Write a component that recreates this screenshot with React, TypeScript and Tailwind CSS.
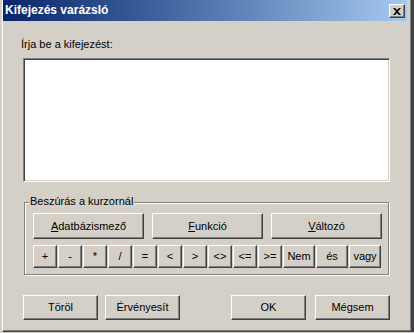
import type { ReactNode } from "react";

const font = { fontFamily: '"Liberation Sans", Arial, sans-serif' };

// klasszikus Win2k gomb (kiemelt keret)
function Btn({ children, className = "" }: { children: ReactNode; className?: string }) {
	return (
		<div
			className={`flex items-center justify-center bg-[#d4d0c8] border border-t-white border-l-white border-r-[#404040] border-b-[#404040] shadow-[inset_-1px_-1px_#808080] text-[11px] leading-[13px] text-black ${className}`}
		>
			{children}
		</div>
	);
}

const ops = ["+", "-", "*", "/", "=", "<", ">", "<>", "<=", ">="];
const words = ["Nem", "és", "vagy"];

export default function App() {
	return (
		<div className="w-[414px] h-[333px] bg-[#d4d0c8] pl-[2px] pb-[1px] flex" style={font}>
			<div className="flex-1 flex border-l border-l-white border-r-[3px] border-r-[#404040] border-b border-b-[#404040]">
				<div className="flex-1 flex flex-col border-r border-r-[#808080] border-b border-b-[#808080] pr-[3px]">
					{/* címsor */}
					<div className="h-[21px] flex items-start bg-gradient-to-r from-[#0a246a] to-[#a6caf0]">
						<div className="pl-[2px] mt-[3px] text-[12px] leading-[15px] font-bold text-white flex-1">Kifejezés varázsló</div>
						<Btn className="w-[16px] h-[14px] mt-[4px] mr-[2px]">
							<svg width="8" height="7" viewBox="0 0 8 7">
								<path d="M0 0h2l2 2l2-2h2l-3 3.5l3 3.5h-2l-2-2l-2 2h-2l3-3.5z" fill="#000" />
							</svg>
						</Btn>
					</div>

					<div className="mt-[17px] pl-[18px] h-[13px] text-[11px] leading-[13px] text-black">Írja be a kifejezést:</div>

					<div className="mt-[7px] ml-[20px] w-[367px] h-[124px] bg-white border border-t-[#808080] border-l-[#808080] border-r-white border-b-white shadow-[inset_1px_1px_#404040,inset_-1px_-1px_#d4d0c8]" />

					{/* Beszúrás csoport */}
					<div className="relative mt-[20px] ml-[21px] w-[365px] h-[73px] border border-[#808080] shadow-[inset_1px_1px_#fff,1px_1px_#fff] pt-[10px] pl-[8px]">
						<span className="absolute -top-[8px] left-[4px] px-[1px] bg-[#d4d0c8] text-[11px] leading-[13px] text-black">Beszúrás a kurzornál</span>
						<div className="flex gap-[8px]">
							<Btn className="w-[111px] h-[26px]">
								<span><u>A</u>datbázismező</span>
							</Btn>
							<Btn className="w-[111px] h-[26px]">
								<span><u>F</u>unkció</span>
							</Btn>
							<Btn className="w-[111px] h-[26px]">
								<span><u>V</u>áltozó</span>
							</Btn>
						</div>
						<div className="flex gap-[1px] mt-[6px]">
							{ops.map((o) => (
								<Btn key={o} className="w-[24px] h-[23px]">{o}</Btn>
							))}
							{words.map((w) => (
								<Btn key={w} className="w-[32px] h-[23px]">{w}</Btn>
							))}
						</div>
					</div>

					<div className="flex mt-[20px] pl-[20px]">
						<Btn className="w-[75px] h-[25px]">Töröl</Btn>
						<Btn className="w-[75px] h-[25px] ml-[7px]">Érvényesít</Btn>
						<Btn className="w-[75px] h-[25px] ml-[51px]">OK</Btn>
						<Btn className="w-[75px] h-[25px] ml-[9px]">Mégsem</Btn>
					</div>
				</div>
			</div>
		</div>
	);
}
